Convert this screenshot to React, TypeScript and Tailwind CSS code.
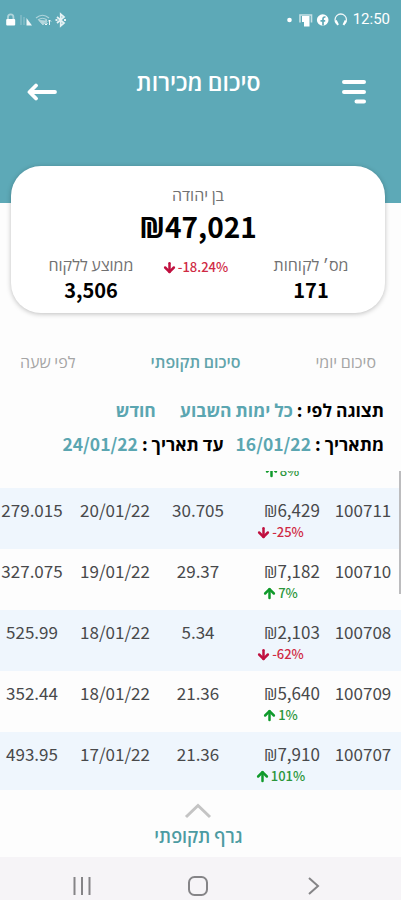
import { ArrowDown, ArrowUp } from 'lucide-react';

interface Sale { id: string; total: string; change: number; avg: string; date: string; amount: string; }

const sales: Sale[] = [
  { id: '100711', total: '₪6,429', change: -25, avg: '30.705', date: '20/01/22', amount: '279.015' },
  { id: '100710', total: '₪7,182', change: 7,   avg: '29.37',  date: '19/01/22', amount: '327.075' },
  { id: '100708', total: '₪2,103', change: -62, avg: '5.34',   date: '18/01/22', amount: '525.99' },
  { id: '100709', total: '₪5,640', change: 1,   avg: '21.36',  date: '18/01/22', amount: '352.44' },
  { id: '100707', total: '₪7,910', change: 101, avg: '21.36',  date: '17/01/22', amount: '493.95' },
];

function StatusBar() {
  return (
    <div className="flex h-[39px] items-center justify-between pl-[5px] pr-[11px] text-white">
      <svg width="64" height="16" viewBox="0 0 64 16" fill="none" stroke="currentColor">
        <path d="M3 7V5a2.700 2.700 0 0 1 5.400 0v2" strokeWidth="1.800" opacity=".5" />
        <rect x="1.200" y="7" width="9" height="6.500" rx="1" fill="currentColor" stroke="none" />
        <path d="M16 3v10M19 5v8" opacity=".35" />
        <path d="M21.500 6v7.500H27z" fill="currentColor" stroke="none" opacity=".9" />
        <path d="M31 6q6.500-5.500 13 0M33 8q4.500-3.500 9 0" strokeWidth="1.200" opacity=".5" />
        <path d="M34 8.500l4 4.500 2-4z" fill="currentColor" opacity=".55" />
        <path d="M41 13V8m-1.500 3.500L41 13l1.500-1.500M44.500 8v5m-1.500-3.500L44.500 8 46 9.500" strokeWidth=".9" />
        <path d="M52 5l7 6-3.300 2.800V2.200L59 5l-7 6" strokeWidth="1.700" opacity=".85" />
        <path d="M50.500 8h2M59 8h2" strokeWidth="2" opacity=".85" />
      </svg>
      <div className="flex items-center gap-[5px]">
        <svg width="61" height="16" viewBox="0 0 61 16" fill="none" stroke="currentColor">
          <circle cx="2.500" cy="8" r="2.300" fill="currentColor" stroke="none" />
          <path d="M13 10.500V3h11.500v7.500" strokeWidth="1.600" opacity=".65" />
          <path d="M15 4h7.500v10.500h-5.500V10H15z" fill="currentColor" stroke="none" />
          <circle cx="35.700" cy="8" r="5.800" fill="currentColor" stroke="none" />
          <path d="M36 13.500V7q0-2.200 2.500-2M33.500 8.800h4.700" stroke="#5da9b7" strokeWidth="1.700" />
          <path d="M49.500 11.500A5.700 5.700 0 1 1 58 11.500" strokeWidth="1.300" opacity=".9" />
          <path d="M48.800 8.500l2.200 4.500M58.700 8.500L56.500 13" strokeWidth="2" />
        </svg>
        <span className="font-['Roboto',sans-serif] text-[15px] leading-none">12:50</span>
      </div>
    </div>
  );
}

function Change({ value }: { value: number }) {
  const down = value < 0;
  const Icon = down ? ArrowDown : ArrowUp;
  return (
    <div dir="ltr" className={`flex items-center justify-center gap-px text-[13px] leading-4 ${down ? 'text-[#cf2a44]' : 'text-[#2b963b]'}`}>
      <Icon size={15} strokeWidth={4} className={`shrink-0 ${down ? 'text-[#c0103f]' : 'text-[#109a2b]'}`} />
      <span className="font-medium">{`${value}%`}</span>
    </div>
  );
}

function SaleRow({ sale, striped }: { sale: Sale; striped: boolean }) {
  return (
    <div dir="ltr" className={`grid h-[61px] grid-cols-[64px_102px_64px_98px_70px] pt-[10px] text-center text-[17px] leading-6 text-[#48494b] ${striped ? 'bg-[#eff6fd]' : 'bg-[#fdfdfd]'}`}>
      <span>{sale.amount}</span>
      <span>{sale.date}</span>
      <span>{sale.avg}</span>
      <div className="pl-[26px]">
        <div>{sale.total}</div>
        <div className="mr-6 mt-0.5"><Change value={sale.change} /></div>
      </div>
      <span>{sale.id}</span>
    </div>
  );
}

export default function App() {
  return (
    <div dir="rtl" className="flex h-[900px] w-[401px] flex-col overflow-hidden whitespace-nowrap bg-[#fdfdfd] font-['Noto_Sans_CJK_JP','Open_Sans',sans-serif] text-black">
      <header dir="ltr" className="h-[203px] shrink-0 bg-[#5da9b7]">
        <StatusBar />
        <div className="flex items-start justify-between pl-[27px] pr-[34px] pt-7 text-white">
          <svg className="mt-[14px]" width="31" height="22" viewBox="0 0 31 22" fill="none" stroke="currentColor" strokeWidth="3.800" strokeLinecap="round" strokeLinejoin="round">
            <path d="M28 11H3M9 4.500L2.500 11 9 17.500" />
          </svg>
          <h1 className="mr-0.5 text-[23px] font-semibold leading-7">סיכום מכירות</h1>
          <svg className="mt-[13px]" width="26" height="26" viewBox="0 0 26 26" stroke="currentColor" strokeWidth="4" strokeLinecap="round">
            <path d="M3 2h20M3 12h20M15.500 21.500H23" />
          </svg>
        </div>
      </header>

      <section dir="ltr" className="relative ml-[11px] mr-4 -mt-[37px] h-[147px] shrink-0 rounded-[30px] bg-white pt-[18px] text-center shadow-[0_1px_5px_rgba(0,0,0,0.25)]">
        <div className="text-[16px] leading-5 text-[#717171]">בן יהודה</div>
        <div className="mt-0.5 text-[28px] font-bold leading-10">₪47,021</div>
        <div className="grid grid-cols-[160px_48px_1fr] items-start pt-2">
          <div>
            <div className="text-[16px] leading-5 text-[#717171]">ממוצע ללקוח</div>
            <div className="text-[20px] font-bold leading-8">3,506</div>
          </div>
          <div className="flex justify-center pt-[5px]"><Change value={-18.24} /></div>
          <div className="pl-[18px]">
            <div className="text-[16px] leading-5 text-[#717171]">מס׳ לקוחות</div>
            <div className="text-[20px] font-bold leading-8">171</div>
          </div>
        </div>
      </section>

      <nav className="flex h-[79px] shrink-0 items-center justify-between pl-5 pr-[25px] pt-4 text-[16px] text-[#a5a5a5]">
        <span>סיכום יומי</span>
        <span className="font-semibold text-[#61a4ab]">סיכום תקופתי</span>
        <span>לפי שעה</span>
      </nav>

      <div className="h-[79px] shrink-0 pr-[17px] pt-px text-[17.500px] font-bold leading-[34px]">
        <div className="flex">
          <span>תצוגה לפי :</span>
          <span className="mr-1 text-[#5ba6b1]">כל ימות השבוע</span>
          <span className="mr-6 text-[#5ba6b1]">חודש</span>
        </div>
        <div className="flex">
          <span>מתאריך :</span>
          <span className="mr-1 text-[#5ba6b1]">16/01/22</span>
          <span className="mr-3">עד תאריך :</span>
          <span className="mr-1 text-[#5ba6b1]">24/01/22</span>
        </div>
      </div>

      <div className="relative h-[319px] shrink-0 overflow-hidden">
        {/* tail of the row scrolled under the filters */}
        <div dir="ltr" className="flow-root h-[17px] pl-[162px]">
          <div className="-mt-2"><Change value={8} /></div>
        </div>
        {sales.map((s, i) => <SaleRow key={s.id} sale={s} striped={i % 2 === 0} />)}
        <div className="absolute right-0 top-0 h-[123px] w-0.5 bg-[#bcbcbe]" />
      </div>

      <button className="flex h-[67px] shrink-0 flex-col items-center pr-1 pt-[13px] text-[18px] font-semibold leading-6 text-[#4c9ba2]">
        <svg className="mr-0.5" width="28" height="16" viewBox="0 0 28 16" fill="none" stroke="#c4c4c4" strokeWidth="3">
          <path d="M2 14L14 2.500 26 14" />
        </svg>
        <span className="mt-1">גרף תקופתי</span>
      </button>

      <footer dir="ltr" className="flex flex-1 items-center justify-between bg-[#f6f4f7] pl-[72px] pr-[80px] pt-[15px] text-[#858487]">
        <svg width="20" height="20" viewBox="0 0 20 20" stroke="currentColor" strokeWidth="2">
          <path d="M2.500 1v18M10 1v18M17.500 1v18" />
        </svg>
        <svg className="mr-1" width="22" height="22" viewBox="0 0 22 22" fill="none" stroke="currentColor" strokeWidth="2">
          <rect x="2" y="2" width="18" height="18" rx="5.500" />
        </svg>
        <svg width="14" height="20" viewBox="0 0 14 20" fill="none" stroke="currentColor" strokeWidth="2">
          <path d="M2 2l9 8-9 8" />
        </svg>
      </footer>
    </div>
  );
}
